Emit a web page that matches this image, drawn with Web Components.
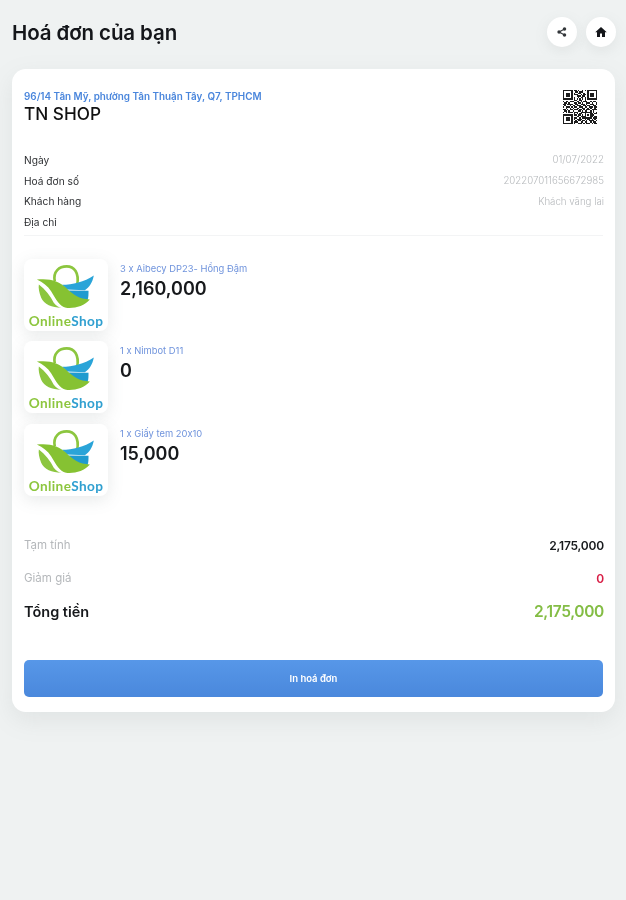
<!DOCTYPE html>
<html lang="vi">
<head>
<meta charset="utf-8">
<title>Hoá đơn của bạn</title>
<style>
  html, body { margin: 0; height: 100%; }
  body { background: #eff2f2; font-family: Inter, "Noto Sans", sans-serif; color: #14161a; font-variant-ligatures: none; font-feature-settings: "calt" 0; }
</style>
</head>
<body>
<invoice-page>
  <page-header title="Hoá đơn của bạn"></page-header>
  <invoice-card>
    <shop-head address="96/14 Tân Mỹ, phường Tân Thuận Tây, Q7, TPHCM" name="TN SHOP"></shop-head>
    <div slot="meta">
      <meta-row label="Ngày" value="01/07/2022"></meta-row>
      <meta-row label="Hoá đơn số" value="202207011656672985"></meta-row>
      <meta-row label="Khách hàng" value="Khách vãng lai"></meta-row>
      <meta-row label="Địa chỉ" value=""></meta-row>
    </div>
    <div slot="items">
      <order-item label="3 x Aibecy DP23- Hồng Đậm" price="2,160,000"></order-item>
      <order-item label="1 x Nimbot D11" price="0"></order-item>
      <order-item label="1 x Giấy tem 20x10" price="15,000"></order-item>
    </div>
    <div slot="totals">
      <total-row label="Tạm tính" value="2,175,000"></total-row>
      <total-row label="Giảm giá" value="0" kind="discount"></total-row>
      <total-row label="Tổng tiền" value="2,175,000" kind="grand"></total-row>
    </div>
    <print-button slot="action">In hoá đơn</print-button>
  </invoice-card>
</invoice-page>

<script>
class InvoicePage extends HTMLElement {
  constructor() {
    super();
    this.attachShadow({ mode: 'open' });
    this.shadowRoot.innerHTML = `
      <style>
        :host { display: block; padding: 0 11px 0 12px; filter: blur(0.5px); }
      </style>
      <slot></slot>
    `;
  }
}

class PageHeader extends HTMLElement {
  constructor() {
    super();
    this.attachShadow({ mode: 'open' });
    this.shadowRoot.innerHTML = `
      <style>
        :host { display: flex; align-items: center; justify-content: space-between; height: 69px; padding-bottom: 5px; box-sizing: border-box; }
        h1 { margin: 0; font-size: 20.5px; font-weight: 600; letter-spacing: -0.1px; }
        .btns { display: flex; gap: 9px; margin-right: -1px; }
        .btn { width: 30px; height: 30px; border-radius: 50%; background: #fff; display: flex; align-items: center; justify-content: center; box-shadow: 0 4px 14px rgba(120,135,135,.12); }
      </style>
      <h1></h1>
      <div class="btns">
        <span class="btn">
          <svg width="10" height="10" viewBox="0 0 24 24" fill="#33373a"><circle cx="18" cy="5" r="4.2"/><circle cx="5" cy="12" r="4.2"/><circle cx="18" cy="19" r="4.2"/><path d="M5 12 18 5M5 12l13 7" stroke="#33373a" stroke-width="2.6"/></svg>
        </span>
        <span class="btn">
          <svg width="12" height="12" viewBox="0 0 24 24" fill="#14161a"><path d="M12 2 0.5 12.5H4V22h6v-7h4v7h6v-9.5h3.5z"/></svg>
        </span>
      </div>
    `;
    this.shadowRoot.querySelector('h1').textContent = this.getAttribute('title');
  }
}

class InvoiceCard extends HTMLElement {
  constructor() {
    super();
    this.attachShadow({ mode: 'open' });
    this.shadowRoot.innerHTML = `
      <style>
        :host { display: block; background: #fff; border-radius: 14px; padding: 21px 12px 16px; box-shadow: 0 8px 24px rgba(120,135,135,.13); height: 643px; box-sizing: border-box; }
        .meta { margin-top: 25px; padding-bottom: 2.5px; border-bottom: 1px solid #f3f4f5; }
        .items { margin-top: 23px; }
        .totals { margin-top: 33px; }
        .action { margin-top: 32px; }
      </style>
      <slot></slot>
      <div class="meta"><slot name="meta"></slot></div>
      <div class="items"><slot name="items"></slot></div>
      <div class="totals"><slot name="totals"></slot></div>
      <div class="action"><slot name="action"></slot></div>
    `;
  }
}

class ShopHead extends HTMLElement {
  constructor() {
    super();
    this.attachShadow({ mode: 'open' });
    this.shadowRoot.innerHTML = `
      <style>
        :host { display: flex; justify-content: space-between; align-items: flex-start; height: 34.5px; }
        .addr { font-size: 9.9px; line-height: 12px; color: #4a86dc; font-weight: 600; }
        .name { font-size: 17.2px; line-height: 22px; font-weight: 500; color: #111; margin-top: 1px; }
        svg { margin-right: 6px; display: block; filter: blur(.35px); }
      </style>
      <div>
        <div class="addr"></div>
        <div class="name"></div>
      </div>
      <svg width="34" height="34" viewBox="0 0 25 25" shape-rendering="crispEdges" fill="#1c1c1c"></svg>
    `;
    this.shadowRoot.querySelector('.addr').textContent = this.getAttribute('address');
    this.shadowRoot.querySelector('.name').textContent = this.getAttribute('name');
    this.drawQr(this.shadowRoot.querySelector('svg'));
  }

  drawQr(svg) {
    const rows = [
      '1111111011010010101111111',
      '1000001001101110001000001',
      '1011101010011001001011101',
      '1011101011100101101011101',
      '1011101000111011001011101',
      '1000001010010110101000001',
      '1111111010101010101111111',
      '0000000011001100100000000',
      '1011011100110101110010110',
      '0110100011011010011101001',
      '1101111001100111010011101',
      '0100010110111001101100110',
      '1011101011001110110111011',
      '0010010100110011001010010',
      '1101011011101101011101111',
      '0110100100011010110010100',
      '1010111011100111111110101',
      '0000000010101100100011011',
      '1111111011011010101011100',
      '1000001000110111100011011',
      '1011101011001011111110111',
      '1011101010111100101101010',
      '1011101001011011010111101',
      '1000001011100110110010110',
      '1111111010011101011101011'
    ];
    let d = '';
    rows.forEach((row, y) => {
      [...row].forEach((c, x) => {
        if (c === '1') d += `M${x} ${y}h1v1h-1z`;
      });
    });
    svg.innerHTML = `<path d="${d}"/>`;
  }
}

class MetaRow extends HTMLElement {
  constructor() {
    super();
    this.attachShadow({ mode: 'open' });
    this.shadowRoot.innerHTML = `
      <style>
        :host { display: flex; justify-content: space-between; align-items: center; height: 20.7px; font-size: 10.2px; }
        .l { color: #2e3033; }
        .v { color: #b5b8bb; font-weight: 300; font-size: 9.7px; margin-right: -1px; }
      </style>
      <span class="l"></span><span class="v"></span>
    `;
    this.shadowRoot.querySelector('.l').textContent = this.getAttribute('label');
    this.shadowRoot.querySelector('.v').textContent = this.getAttribute('value');
  }
}

class ShopLogo extends HTMLElement {
  constructor() {
    super();
    this.attachShadow({ mode: 'open' });
    this.shadowRoot.innerHTML = `
      <style>
        :host { display: flex; flex-direction: column; align-items: center; width: 84px; height: 72px; flex: none; background: #fff; border-radius: 8px; box-shadow: 0 4px 16px rgba(110,125,125,.16); box-sizing: border-box; padding-top: 4px; }
        svg { display: block; margin-left: 1px; }
        .t { font: 700 13.6px/13px Lato, Inter, sans-serif; letter-spacing: .4px; margin-top: 4px; color: #8dc63f; white-space: nowrap; }
        .t span { color: #2f9fd0; }
      </style>
      <svg width="62" height="48" viewBox="50 20 186 145">
        <path d="M106 75C100 45 120 30 142 30C165 30 180 50 174 85" fill="none" stroke="#8cc63f" stroke-width="8"/>
        <path d="M128 86C160 86 195 78 224 58C220 80 210 94 197 102L142 100C138 95 133 90 128 86z" fill="#2aa4d8"/>
        <path d="M146 103L208 104C208 115 208 124 205 132C185 132 165 122 146 103z" fill="#1f9bcf"/>
        <path d="M52 70C90 65 120 75 140 95C160 115 180 130 212 130C195 150 165 158 140 155C120 150 110 130 95 105C85 90 70 78 52 70z" fill="#86c232"/>
        <path d="M58 85C78 100 93 120 103 140C110 150 118 154 126 155C98 155 73 145 65 125C59 110 56 95 58 85z" fill="#8cc63f"/>
      </svg>
      <div class="t">Online<span>Shop</span></div>
    `;
  }
}

class OrderItem extends HTMLElement {
  constructor() {
    super();
    this.attachShadow({ mode: 'open' });
    this.shadowRoot.innerHTML = `
      <style>
        :host { display: flex; gap: 12px; height: 72px; margin-bottom: 10.5px; }
        .l { font-size: 9.4px; line-height: 12px; color: #6f93dc; margin-top: 4px; }
        .p { font-size: 18px; line-height: 24px; font-weight: 600; color: #17191c; margin-top: 2px; }
      </style>
      <shop-logo></shop-logo>
      <div>
        <div class="l"></div>
        <div class="p"></div>
      </div>
    `;
    this.shadowRoot.querySelector('.l').textContent = this.getAttribute('label');
    this.shadowRoot.querySelector('.p').textContent = this.getAttribute('price');
  }
}

class TotalRow extends HTMLElement {
  constructor() {
    super();
    this.attachShadow({ mode: 'open' });
    this.shadowRoot.innerHTML = `
      <style>
        :host { display: flex; justify-content: space-between; align-items: center; height: 33px; font-size: 11.5px; }
        .l { color: #b5b8bb; font-weight: 400; }
        .v { color: #17191c; font-weight: 600; font-size: 12px; letter-spacing: -.2px; margin-right: -1px; }
        :host([kind="discount"]) .v { color: #d81e46; }
        :host([kind="grand"]) .l { color: #17191c; font-size: 14.5px; font-weight: 600; }
        :host([kind="grand"]) .v { color: #84bd45; font-size: 15.5px; letter-spacing: -.35px; }
      </style>
      <span class="l"></span><span class="v"></span>
    `;
    this.shadowRoot.querySelector('.l').textContent = this.getAttribute('label');
    this.shadowRoot.querySelector('.v').textContent = this.getAttribute('value');
  }
}

class PrintButton extends HTMLElement {
  constructor() {
    super();
    this.attachShadow({ mode: 'open' });
    this.shadowRoot.innerHTML = `
      <style>
        :host { display: flex; align-items: center; justify-content: center; height: 37px; border-radius: 5px; background: linear-gradient(#5797e8, #4a88dc); color: #fff; font-size: 9.5px; font-weight: 600; }
      </style>
      <slot></slot>
    `;
  }
}

customElements.define('invoice-page', InvoicePage);
customElements.define('page-header', PageHeader);
customElements.define('invoice-card', InvoiceCard);
customElements.define('shop-head', ShopHead);
customElements.define('meta-row', MetaRow);
customElements.define('shop-logo', ShopLogo);
customElements.define('order-item', OrderItem);
customElements.define('total-row', TotalRow);
customElements.define('print-button', PrintButton);
</script>
</body>
</html>
